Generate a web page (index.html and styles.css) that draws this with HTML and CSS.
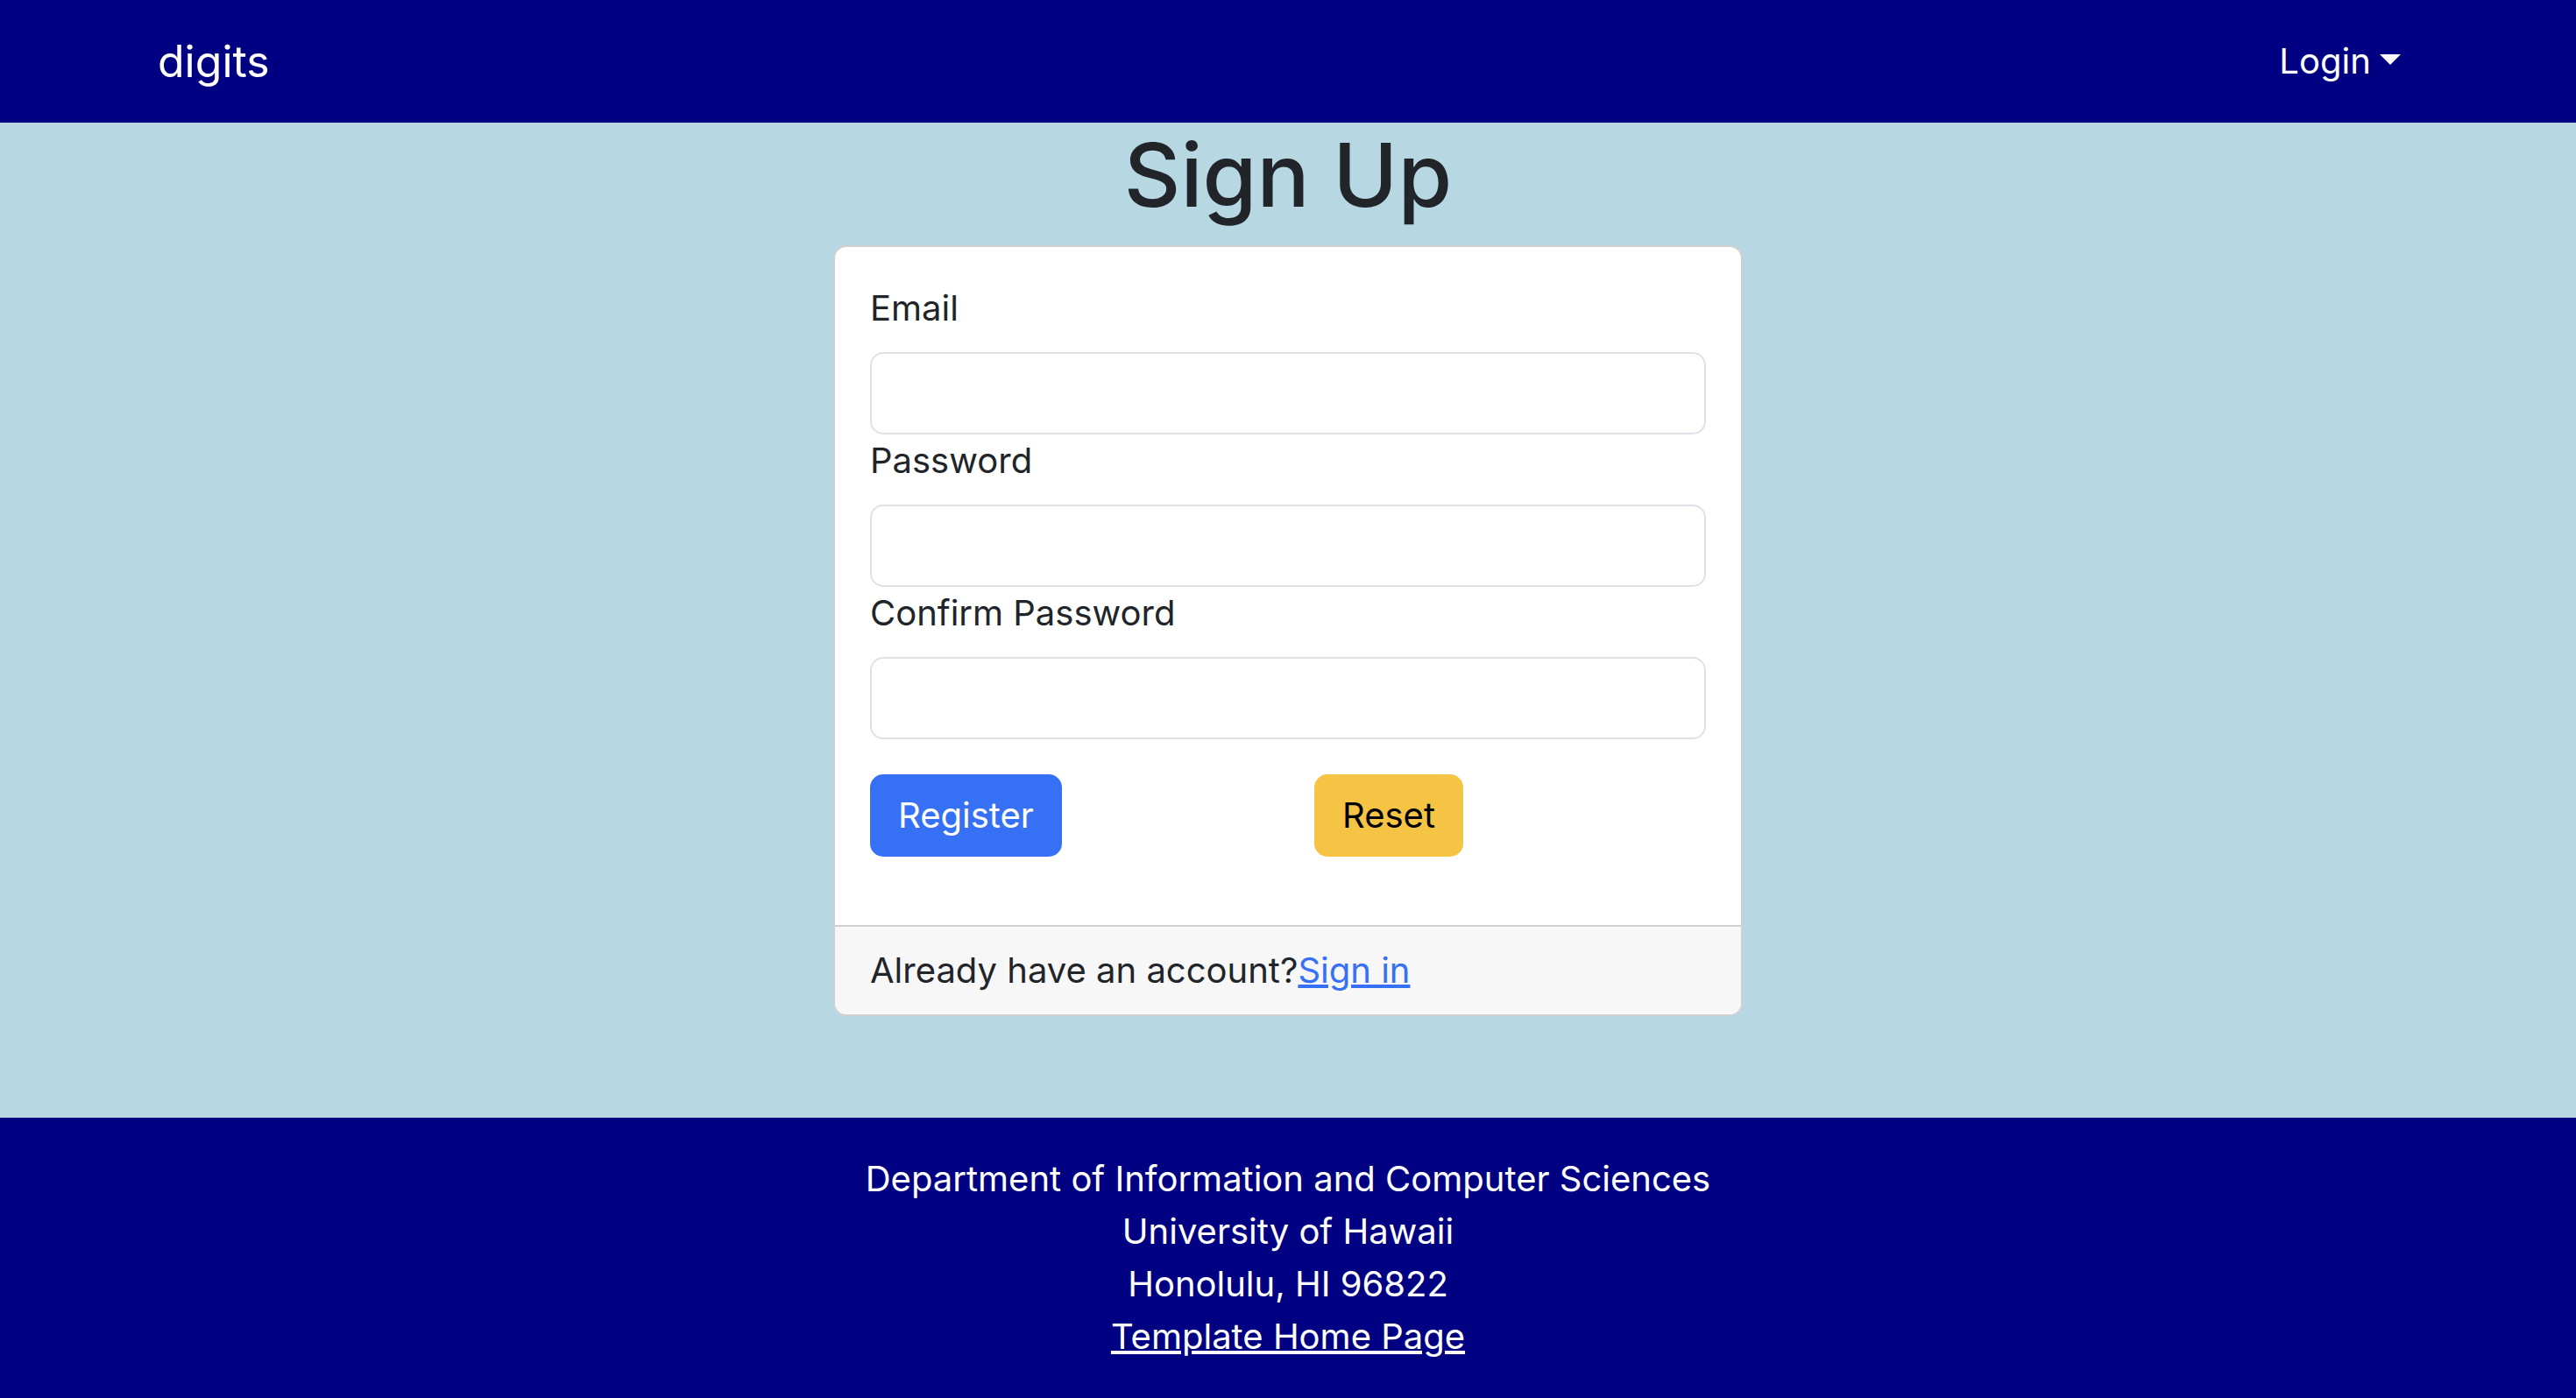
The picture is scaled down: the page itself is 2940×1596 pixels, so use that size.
FILE: index.html
```html
<!DOCTYPE html>
<html lang="en">
<head>
<meta charset="utf-8">
<title>digits - Sign Up</title>
<link rel="stylesheet" href="styles.css">
</head>
<body>
<nav class="navbar">
  <a class="brand" href="#">digits</a>
  <a class="nav-link dropdown-toggle" href="#">Login</a>
</nav>
<main class="main">
  <h1 class="title">Sign Up</h1>
  <div class="card">
    <form class="card-body">
      <div class="field">
        <label class="label" for="email">Email</label>
        <input class="input" id="email" type="text">
      </div>
      <div class="field">
        <label class="label" for="password">Password</label>
        <input class="input" id="password" type="password">
      </div>
      <div class="field">
        <label class="label" for="confirm">Confirm Password</label>
        <input class="input" id="confirm" type="password">
      </div>
      <div class="btn-row">
        <div class="col"><button class="btn btn-primary" type="button">Register</button></div>
        <div class="col"><button class="btn btn-warning" type="button">Reset</button></div>
      </div>
    </form>
    <div class="card-footer">Already have an account?<a class="link" href="#">Sign in</a></div>
  </div>
</main>
<footer class="footer">
  <div>Department of Information and Computer Sciences</div>
  <div>University of Hawaii</div>
  <div>Honolulu, HI 96822</div>
  <div><a class="footer-link" href="#">Template Home Page</a></div>
</footer>
</body>
</html>
```
FILE: styles.css
```css
* { box-sizing: border-box; }
html, body { margin: 0; padding: 0; }
body {
  font-family: Inter, "Noto Sans", "Liberation Sans", sans-serif;
  font-size: 40px;
  line-height: 1.5;
  color: #212529;
  background: #b7d8e3;
  height: 100vh;
  display: flex;
  flex-direction: column;
}
.navbar {
  background: #000082;
  padding: 20px 180px;
  display: flex;
  align-items: center;
  justify-content: space-between;
}
.brand {
  color: #fff;
  text-decoration: none;
  font-size: 50px;
  line-height: 75px;
  padding: 12.5px 0;
}
.nav-link {
  color: #fff;
  text-decoration: none;
  font-size: 40px;
  line-height: 60px;
  padding: 20px;
}
.dropdown-toggle::after {
  content: "";
  display: inline-block;
  margin-left: 0.255em;
  vertical-align: 0.255em;
  border-top: 0.3em solid #fff;
  border-right: 0.3em solid transparent;
  border-left: 0.3em solid transparent;
  border-bottom: 0;
}
.main {
  display: flex;
  flex-direction: column;
  align-items: center;
}
.title {
  margin: 0 0 20px;
  font-size: 100px;
  font-weight: 500;
  line-height: 1.2;
  text-align: center;
}
.card {
  width: 1038px;
  background: #fff;
  border: 2px solid #d0d0d0;
  border-radius: 15px;
  overflow: hidden;
}
.card-body {
  margin: 0;
  padding: 40px 40px 78px;
}
.field { display: flex; flex-direction: column; }
.label {
  display: block;
  line-height: 60px;
  margin-bottom: 20px;
}
.input {
  display: block;
  width: 100%;
  height: 94px;
  border: 2px solid #dee2e6;
  border-radius: 15px;
  background: #fff;
  font: inherit;
}
.btn-row {
  margin-top: 40px;
  display: grid;
  grid-template-columns: 1fr 1fr;
  column-gap: 60px;
  justify-items: start;
}
.btn {
  font-family: inherit;
  font-size: 40px;
  line-height: 60px;
  padding: 15px 30px;
  border-radius: 15px;
  border: 2px solid transparent;
  height: 94px;
}
.btn-primary { background: #3670f5; border-color: #3670f5; color: #fff; }
.btn-warning { background: #f6c445; border-color: #f6c445; color: #000; }
.card-footer {
  background: #f7f7f7;
  border-top: 2px solid #d0d0d0;
  padding: 20px 40px;
  line-height: 60px;
}
.link { color: #3670f5; text-decoration: underline; }
.footer {
  margin-top: auto;
  background: #000082;
  color: #fff;
  text-align: center;
  padding: 40px 0;
  line-height: 60px;
}
.footer-link { color: #fff; text-decoration: underline; }
```
